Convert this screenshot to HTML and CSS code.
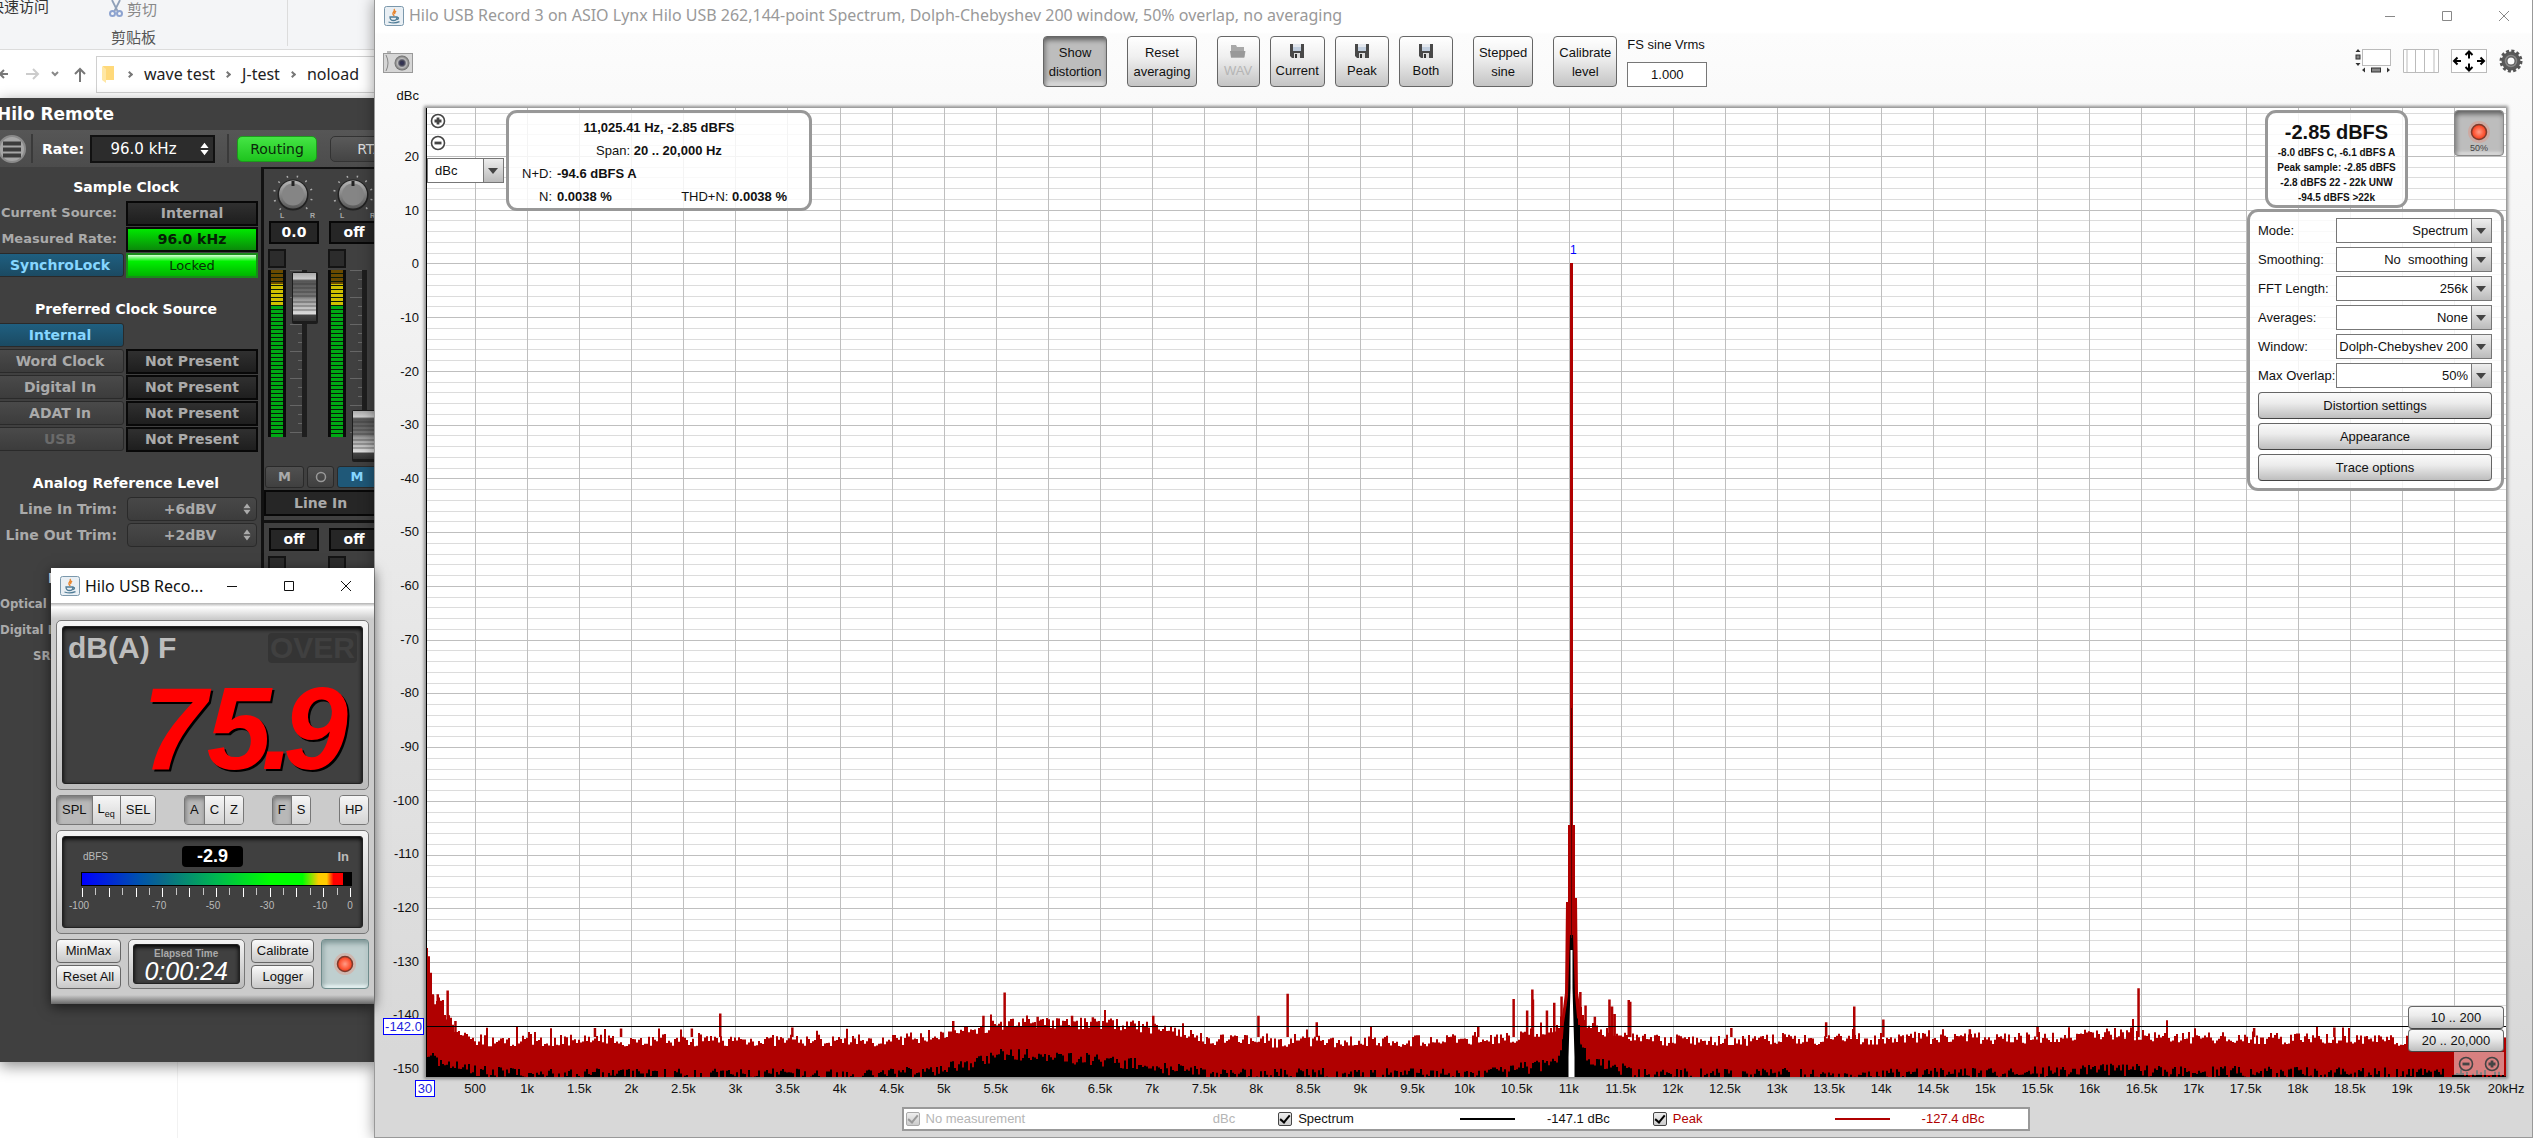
FILE: index.html
```html
<!DOCTYPE html>
<html lang="en">
<head>
<meta charset="utf-8">
<title>Hilo USB Record 3</title>
<link rel="stylesheet" href="styles.css">
</head>
<body>
<svg class="defs" aria-hidden="true">
  <defs>
    <linearGradient id="gMetal" x1="0" y1="0" x2="0" y2="1"><stop offset="0" stop-color="#b5b5b5"/><stop offset="1" stop-color="#585858"/></linearGradient>
    <linearGradient id="gCap" x1="0" y1="0" x2="0" y2="1">
      <stop offset="0" stop-color="#aaa"/><stop offset=".12" stop-color="#ccc"/><stop offset=".16" stop-color="#555"/><stop offset=".5" stop-color="#777"/><stop offset=".55" stop-color="#999"/><stop offset=".85" stop-color="#ddd"/><stop offset=".88" stop-color="#444"/><stop offset="1" stop-color="#333"/>
    </linearGradient>
    <radialGradient id="gLed"><stop offset="0" stop-color="#ff9c88"/><stop offset=".5" stop-color="#ff6a4c"/><stop offset="1" stop-color="#f23a18"/></radialGradient>
    <radialGradient id="gLens"><stop offset="0" stop-color="#222"/><stop offset=".4" stop-color="#556"/><stop offset=".6" stop-color="#bbb"/><stop offset="1" stop-color="#666"/></radialGradient>
  </defs>
  <symbol id="java" viewBox="0 0 20 20">
    <rect x=".5" y=".5" width="19" height="19" rx="2" fill="#e9eff4" stroke="#7b98ac"/>
    <path d="M10 3c2 2-2 3-1 5 0 1 1 1 1 2M12 5c-1 1-2 2-1 3" fill="none" stroke="#e8842c" stroke-width="1.4"/>
    <path d="M6 11h7c0 2-1 3.500-3.500 3.500S6 13 6 11zM13 11.500c2-.5 2 2-.5 2M4.500 16c3 1 8 1 11-.3" fill="none" stroke="#4f7c96" stroke-width="1.300"/>
  </symbol>
  <symbol id="disk" viewBox="0 0 14 14">
    <path d="M0 0h14v14H2l-2-2z" fill="#484848"/><path d="M3 0h8v7H3z" fill="#e4e8ee"/><path d="M3 3h8v4H3z" fill="#c2cfdf"/><path d="M4 9h6v5H4z" fill="#ddd"/><path d="M5 10h2v4H5z" fill="#333"/>
  </symbol>
  <symbol id="plus" viewBox="0 0 16 16"><circle cx="8" cy="8" r="6.500" fill="none" stroke="#444" stroke-width="1.600"/><path d="M8 4.500v7M4.500 8h7" stroke="#444" stroke-width="2.800"/></symbol>
  <symbol id="minus" viewBox="0 0 16 16"><circle cx="8" cy="8" r="6.500" fill="none" stroke="#444" stroke-width="1.600"/><path d="M4.500 8h7" stroke="#444" stroke-width="2.800"/></symbol>
  <symbol id="led" viewBox="0 0 24 24"><circle cx="12" cy="12" r="11" fill="#ff7050" opacity=".25"/><circle cx="12" cy="12" r="7.500" fill="url(#gLed)" stroke="#7d3a2c" stroke-width="1.500"/></symbol>
  <symbol id="updown" viewBox="0 0 10 14"><path d="M5 0l4.500 6h-9zM5 14l4.500-6h-9z" fill="currentColor"/></symbol>
  <symbol id="min" viewBox="0 0 12 12"><path d="M1 6.500h10" stroke="currentColor"/></symbol>
  <symbol id="max" viewBox="0 0 12 12"><path d="M1.500 1.500h9v9h-9z" fill="none" stroke="currentColor"/></symbol>
  <symbol id="close" viewBox="0 0 12 12"><path d="M1 1l10 10M11 1L1 11" stroke="currentColor"/></symbol>
  <symbol id="knob" viewBox="0 0 42 44">
    <circle cx="21" cy="20" r="19" fill="none" stroke="#aaa" stroke-width="2" stroke-dasharray="1.500 8.450" transform="rotate(130 21 20)"/>
    <path d="M10 32h22v9H10z" fill="#404040"/>
    <circle cx="21" cy="20" r="15.500" fill="#222"/><circle cx="21" cy="19.500" r="14" fill="url(#gMetal)"/><circle cx="21" cy="19.500" r="11" fill="#858585"/>
    <path d="M19.500 6h3v5h-3z" fill="#222"/>
  </symbol>
  <symbol id="fader" viewBox="0 0 26 52">
    <rect width="26" height="52" rx="2" fill="#1c1c1c"/><rect x="1" y="1" width="23" height="48" fill="url(#gCap)"/>
    <path d="M1 12h23M1 16h23M1 20h23M1 24h23M1 30h23M1 34h23M1 38h23" stroke="#333" stroke-width="1" opacity=".6"/>
  </symbol>
</svg>

<div class="desktop">
  <section class="explorer">
    <div class="ribbon">
      <span class="quick">快速访问</span>
      <div class="clip">
        <span class="cut"><svg width="14" height="18" viewBox="0 0 14 18"><path d="M3 0l5.500 11M11 0L5.500 11" stroke="#8fa0b8" stroke-width="1.800"/><circle cx="3.500" cy="13.500" r="2.500" fill="none" stroke="#8da3d0" stroke-width="2"/><circle cx="10.500" cy="13.500" r="2.500" fill="none" stroke="#8da3d0" stroke-width="2"/></svg>剪切</span>
        <span>剪贴板</span>
      </div>
    </div>
    <nav class="address">
      <svg class="arrows" width="88" height="18" viewBox="0 0 88 18" fill="none" stroke-width="2"><path d="M8 9h-8M4 5L0 9l4 4" stroke="#777"/><path d="M26 9h11M33 4l5 5-5 5" stroke="#ccc"/><path d="M52 7l3 3 3-3" stroke="#888"/><path d="M80 17V4M75 9l5-5 5 5" stroke="#777"/></svg>
      <div class="crumbs">
        <svg width="13" height="17" viewBox="0 0 13 17"><path d="M1 0h11v14H3z" fill="#ffd97a"/><path d="M0 0l4 3v14l-4-3z" fill="#ffe7a4"/></svg>
        <i></i><a href="#">wave test</a><i></i><a href="#">J-test</a><i></i><a href="#">noload</a>
      </div>
    </nav>
    <div class="files"></div>
  </section>

  <section class="remote">
    <h1>Hilo Remote</h1>
    <div class="rbar">
      <button class="menu" aria-label="Menu"><svg width="28" height="28" viewBox="0 0 28 28"><circle cx="14" cy="14" r="13" fill="#a6a6a6" stroke="#8a8a8a" stroke-width="2"/><path d="M5 8.500h18M5 14.500h18M5 20.500h18" stroke="#3c3c3c" stroke-width="4"/></svg></button>
      <span class="vline"></span>
      <label for="rate">Rate:</label>
      <span class="rsel big"><select id="rate"><option>96.0 kHz</option></select><svg width="9" height="14"><use href="#updown"/></svg></span>
      <span class="vline"></span>
      <button class="routing">Routing</button>
      <button class="rta">RTA</button>
    </div>
    <div class="rbody">
      <div class="clock">
        <h2>Sample Clock</h2>
        <div class="pair"><span class="lab">Current Source:</span><span class="box">Internal</span></div>
        <div class="pair"><span class="lab">Measured Rate:</span><span class="box rated">96.0 kHz</span></div>
        <div class="pair"><button class="rb on">SynchroLock</button><span class="box locked">Locked</span></div>
        <h2 class="gap">Preferred Clock Source</h2>
        <div class="pair"><button class="rb on">Internal</button></div>
        <div class="pair"><button class="rb">Word Clock</button><span class="box">Not Present</span></div>
        <div class="pair"><button class="rb">Digital In</button><span class="box">Not Present</span></div>
        <div class="pair"><button class="rb">ADAT In</button><span class="box">Not Present</span></div>
        <div class="pair"><button class="rb dim">USB</button><span class="box">Not Present</span></div>
        <h2 class="gap">Analog Reference Level</h2>
        <div class="pair trim"><label class="lab" for="lin">Line In Trim:</label><span class="rsel"><select id="lin"><option>+6dBV</option></select><svg width="8" height="12"><use href="#updown"/></svg></span></div>
        <div class="pair trim"><label class="lab" for="lout">Line Out Trim:</label><span class="rsel"><select id="lout"><option>+2dBV</option></select><svg width="8" height="12"><use href="#updown"/></svg></span></div>
        <h2 class="cutoff">Digital</h2>
        <div class="thin">Optical In:</div>
        <div class="thin">Digital In:</div>
        <div class="thin src">SRC:</div>
      </div>
      <div class="mixer">
        <div class="channels">
          <div class="chan">
            <svg class="pan" width="42" height="44"><use href="#knob"/></svg><div class="lr"><b>L</b><b>R</b></div>
            <span class="val">0.0</span><span class="clipled"></span>
            <div class="lane"><span class="meter"></span><span class="track"><svg class="fader hi" width="26" height="52"><use href="#fader"/></svg></span></div>
          </div>
          <div class="chan">
            <svg class="pan" width="42" height="44"><use href="#knob"/></svg><div class="lr"><b>L</b><b>R</b></div>
            <span class="val">off</span><span class="clipled"></span>
            <div class="lane"><span class="meter"></span><span class="track"><svg class="fader lo" width="26" height="52"><use href="#fader"/></svg></span></div>
          </div>
        </div>
        <div class="mutes"><button>M</button><button class="o" aria-label="Solo"><svg width="12" height="12"><circle cx="6" cy="6" r="4.500" fill="none" stroke="#999" stroke-width="1.500"/></svg></button><button class="on">M</button></div>
        <div class="name">Line In</div>
        <div class="channels low">
          <div class="chan"><span class="val">off</span><span class="clipled"></span></div>
          <div class="chan"><span class="val">off</span><span class="clipled"></span></div>
        </div>
      </div>
    </div>
  </section>

  <section class="main">
    <header class="title">
      <svg width="20" height="20"><use href="#java"/></svg>
      <h1>Hilo USB Record 3 on ASIO Lynx Hilo USB 262,144-point Spectrum, Dolph-Chebyshev 200 window, 50% overlap, no averaging</h1>
      <div class="wbtns"><button aria-label="Minimise"><svg width="12" height="12"><use href="#min"/></svg></button><button aria-label="Maximise"><svg width="12" height="12"><use href="#max"/></svg></button><button aria-label="Close"><svg width="12" height="12"><use href="#close"/></svg></button></div>
    </header>
    <div class="tools">
      <button class="flat" aria-label="Capture"><svg width="30" height="22" viewBox="0 0 30 22"><path d="M4 0h4v2H4z" fill="#bbb"/><rect x=".5" y="2.500" width="29" height="19" fill="#d6d6d6" stroke="#999"/><path d="M3 4q4 8 0 16" fill="none" stroke="#888"/><circle cx="19" cy="12" r="7.500" fill="url(#gLens)"/><circle cx="19" cy="12" r="2" fill="#335"/></svg></button>
      <div class="group">
        <button class="tb pressed">Show<br>distortion</button>
        <button class="tb">Reset<br>averaging</button>
        <div class="saves">
          <button class="tb ico wav" disabled><svg width="16" height="14" viewBox="0 0 16 14"><path d="M1 1h5l1 2h7v4h1.500l-1 6.500H1z" fill="#a8a8a8"/><path d="M0 7h15l-1 6.500H1z" fill="#999"/></svg>WAV</button>
          <button class="tb ico"><svg width="14" height="14"><use href="#disk"/></svg>Current</button>
          <button class="tb ico"><svg width="14" height="14"><use href="#disk"/></svg>Peak</button>
          <button class="tb ico"><svg width="14" height="14"><use href="#disk"/></svg>Both</button>
        </div>
        <button class="tb step">Stepped<br>sine</button>
        <div class="saves fs"><button class="tb">Calibrate<br>level</button>
        <div class="vrms"><label for="fs">FS sine Vrms</label><input id="fs" value="1.000"></div></div>
      </div>
      <div class="views">
        <button class="flat" aria-label="Scrollbars"><svg width="36" height="24" viewBox="0 0 36 24"><rect x="7.500" y=".5" width="28" height="16" fill="#fff" stroke="#bbb"/><path d="M3 0l2.500 3h-5zM3 17l2.500-3h-5zM7 21l3-2.500v5zM35 21l-3-2.500v5z" fill="#333"/><rect x="1" y="6" width="4" height="4" fill="#888" stroke="#333"/><rect x="16.500" y="19" width="9" height="4" fill="#888" stroke="#333"/></svg></button>
        <button class="flat" aria-label="Frequency axis"><svg width="36" height="24" viewBox="0 0 36 24"><path d="M.5.5h35v23H.5zM4 0v24M12.500 0v24M21.500 0v24M31 0v24" fill="#fff" stroke="#bbb"/></svg></button>
        <button class="flat" aria-label="Graph limits"><svg width="36" height="24" viewBox="0 0 36 24"><rect x=".5" y=".5" width="35" height="23" fill="#fff" stroke="#bbb"/><path d="M3 12h7M6.500 8.500L3 12l3.500 3.500M33 12h-7M29.500 8.500L33 12l-3.500 3.500M18 2.500v7M14.500 6L18 2.500 21.500 6M18 21.500v-7M14.500 18l3.500 3.500 3.500-3.500" fill="none" stroke="#000" stroke-width="2"/></svg></button>
        <button class="flat gear" aria-label="Settings"><svg width="24" height="24" viewBox="0 0 24 24"><circle cx="12" cy="12" r="6.500" fill="none" stroke="#5a5a5a" stroke-width="6"/><circle cx="12" cy="12" r="10" fill="none" stroke="#555" stroke-width="3" stroke-dasharray="3 2.236"/><circle cx="12" cy="12" r="5.500" fill="none" stroke="#888" stroke-width="1.500"/></svg></button>
      </div>
    </div>
    <div class="chart">
      <div class="unit">dBc</div>
      <div class="ylabels"><div class="ticks" id="yticks"></div><output class="cursor ycur">-142.0</output></div>
      <div class="plot">
        <svg id="trace" viewBox="0 0 2080 969" preserveAspectRatio="none"></svg>
        <span class="mark">1</span>
        <div class="zoomer"><button class="flat" aria-label="Zoom in"><svg width="16" height="16"><use href="#plus"/></svg></button><button class="flat" aria-label="Zoom out"><svg width="16" height="16"><use href="#minus"/></svg></button>
          <span class="combo unitsel"><select aria-label="Axis unit"><option>dBc</option></select></span></div>
        <div class="card info">
          <p><b>11,025.41 Hz, -2.85 dBFS</b></p>
          <p>Span: <b>20 .. 20,000 Hz</b></p>
          <p class="two"><span class="k">N+D:</span><b>-94.6 dBFS A</b></p>
          <p class="two"><span class="k">N:</span><b>0.0038 %</b><span class="thd">THD+N: <b>0.0038 %</b></span></p>
        </div>
        <div class="card level"><strong>-2.85 dBFS</strong><span>-8.0 dBFS C, -6.1 dBFS A</span><span>Peak sample: -2.85 dBFS</span><span>-2.8 dBFS 22 - 22k UNW</span><span>-94.5 dBFS &gt;22k</span></div>
        <button class="rec"><svg width="24" height="24"><use href="#led"/></svg>50%</button>
        <form class="card settings">
          <label for="s1">Mode:</label><span class="combo"><select id="s1"><option>Spectrum</option></select></span>
          <label for="s2">Smoothing:</label><span class="combo"><select id="s2"><option>No&nbsp; smoothing</option></select></span>
          <label for="s3">FFT Length:</label><span class="combo"><select id="s3"><option>256k</option></select></span>
          <label for="s4">Averages:</label><span class="combo"><select id="s4"><option>None</option></select></span>
          <label for="s5">Window:</label><span class="combo"><select id="s5"><option>Dolph-Chebyshev 200</option></select></span>
          <label for="s6">Max Overlap:</label><span class="combo"><select id="s6"><option>50%</option></select></span>
          <button type="button" class="wide">Distortion settings</button>
          <button type="button" class="wide">Appearance</button>
          <button type="button" class="wide">Trace options</button>
        </form>
        <div class="ranges"><button class="wide">10 .. 200</button><button class="wide">20 .. 20,000</button><div class="zz"><button class="flat" aria-label="Zoom out"><svg width="16" height="16"><use href="#minus"/></svg></button><button class="flat" aria-label="Zoom in"><svg width="16" height="16"><use href="#plus"/></svg></button></div></div>
      </div>
      <div class="xlabels"><output class="cursor xcur">30</output><div class="ticks" id="xticks"></div></div>
    </div>
    <div class="legend">
      <div class="leg off"><label><input type="checkbox" checked disabled>No measurement</label><span>dBc</span></div>
      <div class="leg"><label><input type="checkbox" checked>Spectrum</label><i></i><span>-147.1 dBc</span></div>
      <div class="leg peak"><label><input type="checkbox" checked>Peak</label><i></i><span>-127.4 dBc</span></div>
    </div>
  </section>

  <section class="spl">
    <header class="title">
      <svg width="20" height="20"><use href="#java"/></svg><h1>Hilo USB Reco...</h1>
      <div class="wbtns"><button aria-label="Minimise"><svg width="12" height="12"><use href="#min"/></svg></button><button aria-label="Maximise"><svg width="12" height="12"><use href="#max"/></svg></button><button aria-label="Close"><svg width="12" height="12"><use href="#close"/></svg></button></div>
    </header>
    <div class="sbody">
      <div class="bezel"><div class="lcd">
        <div class="lcdtop"><span>dB(A) F</span><span class="over">OVER</span></div>
        <div class="digits">75<span class="dot">.</span>9</div>
      </div></div>
      <div class="modes">
        <div class="seg"><button class="down">SPL</button><button>L<sub>eq</sub></button><button>SEL</button></div>
        <div class="seg"><button class="down">A</button><button>C</button><button>Z</button></div>
        <div class="seg"><button class="down">F</button><button>S</button></div>
        <div class="seg"><button>HP</button></div>
      </div>
      <div class="bezel"><div class="lcd vu">
        <div class="vutop"><span>dBFS</span><output>-2.9</output><b>In</b></div>
        <div class="bar"></div>
        <svg class="vticks" width="271" height="9" id="vticks"></svg>
        <div class="vnums"><span>-100</span><span>-70</span><span>-50</span><span>-30</span><span>-10</span><span>0</span></div>
      </div></div>
      <div class="foot">
        <div class="col"><button class="sb">MinMax</button><button class="sb">Reset All</button></div>
        <div class="bezel small"><div class="lcd time"><span>Elapsed Time</span><output>0:00:24</output></div></div>
        <div class="col"><button class="sb">Calibrate</button><button class="sb">Logger</button></div>
        <button class="srec" aria-label="Record"><svg width="24" height="24"><use href="#led"/></svg></button>
      </div>
    </div>
  </section>
</div>
<script src="chart.js"></script>
</body>
</html>
```
FILE: chart.js
```js
// Builds the axis labels, grid and spectrum traces.
const W = 2080, H = 969, TOP = 28.9, SPAN = 180.3;
const fx = f => (f - 30) / 19970 * W;
const hz = x => 30 + x / W * 19970;
const fy = db => (TOP - db) / SPAN * H;

let seed = 7;
const rnd = () => (seed = (seed * 16807) % 2147483647) / 2147483647;

// Linear interpolation through [frequency, level] points.
function level(points, f) {
  for (let i = 1; i < points.length; i++) {
    const [a, va] = points[i - 1], [b, vb] = points[i];
    if (f <= b) return va + (vb - va) * (f - a) / (b - a);
  }
  return points[points.length - 1][1];
}

const redBase = [[30, -127], [60, -131], [90, -137], [220, -140], [300, -142.6], [500, -144.7], [4500, -144.7], [5200, -143], [5600, -141.5], [6600, -141.6], [7100, -142.6], [7500, -144.4], [8200, -145], [10200, -144.7], [10500, -144], [10900, -142], [10980, -138], [11070, -138], [11150, -141], [11350, -144], [12000, -144.8], [13000, -144.6], [15500, -144.2], [16200, -143.4], [17000, -144.2], [20000, -144.8]];
const blackBase = [[30, -147], [150, -148.5], [400, -150], [1000, -151], [4500, -151], [5200, -149.2], [5550, -147], [6500, -148.2], [7000, -149.5], [7500, -150.8], [10200, -151], [10500, -150], [10800, -149], [10920, -147], [10990, -140], [11060, -140], [11130, -146], [11200, -148.5], [11500, -150], [11800, -151], [15300, -150.8], [16000, -149.8], [17000, -150.5], [20000, -151]];
const peaks = [[95, -136.2], [140, -136], [235, -135.3], [310, -141], [1650, -142.3], [1900, -142.4], [2580, -142.4], [2853, -139.6], [3545, -142.2], [5090, -141], [5380, -140], [5583, -135.7], [5900, -140.2], [6230, -140], [6430, -140.3], [7010, -140], [8020, -140], [8300, -135.9], [8580, -141.2], [10130, -142], [10470, -136.9], [10600, -139], [10650, -135.1], [10655, -137], [10790, -139], [10860, -137.6], [10930, -136.4], [11110, -135.6], [11160, -138.1], [11250, -140.2], [11390, -137], [11415, -138.3], [11440, -139.7], [11575, -137.1], [11590, -137.4], [12560, -142.3], [13470, -141.2], [13740, -138.3], [14020, -140.7], [14850, -142.5], [15500, -142], [16470, -134.9], [17580, -142.3], [18350, -142.2]];

const grid = { minor: '', major: '' };
for (let db = 28; db > -151; db -= 2) grid[db % 10 ? 'minor' : 'major'] += `M0 ${Math.round(fy(db)) + .5}H${W}`;
for (let f = 500; f < 20000; f += 500) grid.major += `M${Math.round(fx(f)) + .5} 0V${H}`;

let red = `M0 ${H}`, black = `M0 ${H}`;
for (let x = 0; x < W; x += 2) {
  const f = hz(x);
  const r = level(redBase, f) + (rnd() - .45) * 2.2 + (rnd() > .9 ? rnd() * 2 : 0);
  const k = level(blackBase, f) + (rnd() - .5) * 2.4;
  red += `V${fy(r).toFixed(1)}H${x + 2}`;
  black += `V${Math.min(H, fy(k)).toFixed(1)}H${x + 2}`;
}
red += `V${H}z`;
black += `V${H}z`;
for (const [f, db] of peaks) red += `M${(fx(f) - 1).toFixed(1)} ${H - 40}V${fy(db).toFixed(1)}h2.500V${H - 40}z`;

document.getElementById('trace').innerHTML = `
  <path d="${grid.minor}" stroke="#dcdcdc" shape-rendering="crispEdges"/>
  <path d="${grid.major}" stroke="#bfbfbf" shape-rendering="crispEdges"/>
  <path d="${red}" fill="#b00000"/>
  <path d="M1134 969V925L1139 885L1140 794H1142V717H1144V155H1147V717H1149V790H1151L1152 885L1158 925V969z" fill="#b00000"/>
  <path d="${black}" fill="#000"/>
  <path d="M1134 969L1138 915L1142 888L1144 827H1147L1149 888L1152 920L1159 969z" fill="#000"/>
  <path d="M1145.500 600V830" stroke="#5a0000"/>
  <path d="M1142.500 969V949L1144.500 880V842H1146.500V880L1148.500 949V969z" fill="#fff"/>
  <path d="M0 ${Math.round(fy(-142)) + .5}H${W}M.5 0V${H}" stroke="#000" shape-rendering="crispEdges"/>`;

const yt = [], xt = [];
for (let v = 20; v >= -150; v -= 10) yt.push(`<span>${v}</span>`);
for (let f = 500; f <= 20000; f += 500) xt.push(`<span>${f < 1000 ? f : f / 1000 + (f === 20000 ? 'kHz' : 'k')}</span>`);
document.getElementById('yticks').innerHTML = yt.join('');
document.getElementById('xticks').innerHTML = xt.join('');

let t = '';
for (let i = 0; i <= 20; i++) t += `<path d="M${Math.round(i * 13.4) + 1.5} 0v${i % 2 ? 7 : 9}" stroke="#fff" opacity="${i % 2 ? .7 : 1}"/>`;
document.getElementById('vticks').innerHTML = t;
```
FILE: styles.css
```css
* { box-sizing: border-box; }
body { margin: 0; font: 13px/16px "Liberation Sans", Arial, sans-serif; color: #111; background: #fff; }
button, input, select { font: inherit; color: inherit; margin: 0; }
button { padding: 0; white-space: nowrap; }
select { appearance: none; background: none; border: 0; padding: 0; margin: 0; }
h1, h2, p { margin: 0; }
svg { display: block; flex: none; }
.defs { position: absolute; width: 0; height: 0; }
.flat { border: 0; background: none; }
.desktop { position: relative; height: 100vh; overflow: hidden; }

/* Window frames */
.title { display: flex; align-items: center; background: #fff; }
.title h1 { flex: 1; font: 16px/20px "Noto Sans", sans-serif; white-space: nowrap; }
.wbtns { display: flex; }
.wbtns button { width: 57px; border: 0; background: none; display: grid; place-items: center; }

/* Explorer */
.explorer { position: absolute; left: 0; top: 0; bottom: 0; width: 375px; display: flex; flex-direction: column; font: 15px/20px "Noto Sans", "Noto Sans CJK SC", sans-serif; overflow: hidden; }
.ribbon { height: 50px; background: #f4f5f7; border-bottom: 1px solid #dcdcdc; display: flex; flex: none; font-family: "Noto Sans CJK SC", sans-serif; }
.quick { margin: -4px 0 0 -11px; width: 73px; color: #333; }
.clip { width: 226px; display: flex; flex-direction: column; gap: 9px; padding: 0 0 0 49px; border-right: 1px solid #dcdcdc; height: 46px; color: #555; }
.cut { display: flex; gap: 4px; color: #888; line-height: 18px; }
.cut svg { margin-left: -2px; }
.address { display: flex; align-items: center; height: 48px; flex: none; gap: 8px; }
.crumbs { flex: 1; height: 37px; border: 1px solid #d0d0d0; border-right: 0; display: flex; align-items: center; padding-left: 5px; font-size: 16px; white-space: nowrap; }
.crumbs a { color: #222; text-decoration: none; }
.crumbs i { width: 5px; height: 5px; border: solid #777; border-width: 2px 2px 0 0; transform: rotate(45deg); margin: 0 12px 0 10px; }
.crumbs svg { margin-right: 2px; }
.files { flex: 1; width: 178px; border-right: 1px solid #f2f2f2; }

/* Hilo Remote */
.remote { position: absolute; left: 0; top: 98px; width: 375px; height: 964px; background: #404040; color: #fff; font: bold 14px/18px "DejaVu Sans", sans-serif; box-shadow: 0 4px 14px rgba(0,0,0,.45); overflow: hidden; }
.remote h1 { font-size: 17px; line-height: 32px; margin-left: -3px; }
.rbar { height: 37px; display: flex; align-items: center; background: linear-gradient(#565656, #4c4c4c); }
.rbar > * { flex: none; }
.menu { border: 0; background: none; width: 26px; margin-left: -2px; height: 28px; }
.vline { width: 2px; height: 29px; background: #3a3a3a; margin: 0 9px 0 7px; }
.rbar .rsel + .vline { margin: 0 8px 0 12px; }
.rsel { position: relative; display: block; }
.rsel svg { position: absolute; right: 6px; top: 6px; color: #aaa; pointer-events: none; }
.rsel select { width: 100%; height: 24px; text-align-last: center; padding-right: 4px; color: #aaa; background: linear-gradient(#484848, #3c3c3c); border: 1px solid #2a2a2a; border-radius: 4px; }
.rsel.big { width: 125px; margin-left: 6px; }
.rsel.big select { height: 28px; background: #2c2c2c; border: 2px solid #111; border-radius: 0; color: #fff; font-size: 15px; font-weight: normal; padding-right: 18px; }
.rsel.big svg { color: #fff; top: 7px; }
.routing, .rta { height: 26px; width: 80px; border: 1px solid #1c9a1c; border-radius: 5px; background: linear-gradient(#45e545, #1ec41e); color: #0a2a0a; font-weight: normal; }
.rta { margin-left: 13px; background: linear-gradient(#5a5a5a, #444); border-color: #333; color: #ddd; }
.rbody { display: grid; grid-template-columns: 260px 1fr; }
.clock { padding: 7px 2px 0 0; }
.clock h2 { font-size: 14px; line-height: 26px; text-align: center; padding-right: 6px; white-space: nowrap; }
.clock h2.gap { margin: 18px 0 0; }
.pair { display: grid; grid-template-columns: 124px 132px; gap: 2px; height: 26px; align-items: center; }
.lab { text-align: right; color: #aaa; padding-right: 7px; font-size: 13px; white-space: nowrap; }
.trim .lab { font-size: 14px; }
.box { height: 25px; border: 2px solid #080808; background: linear-gradient(#303030, #1e1e1e); color: #aaa; text-align: center; line-height: 21px; font-size: 14px; }
.box.rated { background: linear-gradient(#00e800, #0a8a0a); color: #052005; }
.box.locked { background: linear-gradient(#d8ffd8, #00f000 30%, #00b400); border-color: #1a8a1a; color: #063006; font-weight: normal; font-size: 13px; }
.rb { height: 24px; border: 1px solid #2a2a2a; border-radius: 3px; background: linear-gradient(#4a4a4a, #3c3c3c); color: #aaa; margin-left: -4px; }
.rb.on { background: linear-gradient(#1f5f80, #1b4a62); color: #86d6ff; }
.rb.dim { color: #6a6a6a; }
.trim .rsel { margin: 0 1px; }
.clock h2.cutoff { text-align: left; padding-left: 48px; margin-top: 17px; }
.thin { font: bold 13px/26px "DejaVu Sans Condensed", "DejaVu Sans", sans-serif; color: #aaa; }
.thin.src { padding-left: 33px; }
.mixer { border-left: 3px solid #111; border-top: 2px solid #111; margin-left: 1px; width: 140px; }
.channels { display: flex; gap: 8px; padding: 6px 0 0 4px; }
.chan { width: 52px; display: flex; flex-direction: column; flex: none; }
.pan { margin-left: 4px; }
.lr { display: flex; justify-content: space-between; font: bold 7px/8px "Liberation Sans", sans-serif; color: #aaa; padding: 0 5px 0 12px; margin-top: -7px; }
.val { height: 23px; border: 2px solid #080808; background: #262626; text-align: center; line-height: 19px; font-size: 14px; margin: 1px 1px 5px; }
.clipled { width: 18px; height: 19px; border: 2px solid #141414; background: #2c2c2c; }
.lane { display: flex; margin-top: 2px; height: 167px; gap: 4px; }
.meter { width: 18px; border: solid #0a0a0a; border-width: 0 3px; background: repeating-linear-gradient(transparent 0 3px, #0a1a0a 3px 4px), linear-gradient(#6a4a00 0 14px, #d0c000 14px 36px, #00a814 36px); }
.track { position: relative; width: 26px; background: linear-gradient(#1e1e1e, #1e1e1e) 12px 0 / 5px 100% no-repeat, repeating-linear-gradient(#666 0 1px, transparent 1px 9px) 8px 0 / 4px 100% no-repeat, repeating-linear-gradient(#666 0 1px, transparent 1px 27px) 0 0 / 12px 100% no-repeat; }
.fader { position: absolute; left: 2px; }
.fader.hi { top: 2px; }
.fader.lo { top: 140px; }
.mutes { display: flex; gap: 3px; margin: 29px 0 2px 1px; }
.mutes button { width: 39px; height: 22px; border: 1px solid #2a2a2a; border-radius: 3px; background: linear-gradient(#505050, #404040); color: #aaa; font-size: 13px; display: grid; place-items: center; }
.mutes .o { width: 27px; }
.mutes .on { background: #1f5878; color: #86d6ff; width: 40px; }
.name { border: 2px solid #080808; height: 26px; background: #262626; color: #aaa; line-height: 22px; padding-left: 28px; }
.low { margin-top: 4px; border-top: 3px solid #111; padding-top: 4px; }

/* Spectrum window */
.main { position: absolute; left: 374px; right: 0; top: 0; bottom: 0; display: flex; flex-direction: column; border: 1px solid #999; border-top: 0; background: linear-gradient(#fff 32px, #fcfcfc 34px, #d8d8d8 1050px); box-shadow: 0 0 14px rgba(0,0,0,.4); }
.main > .title { height: 32px; flex: none; padding-left: 9px; background: none; }
.main > .title h1 { color: #999; margin: 0 0 2px 5px; }
.main > .title svg { color: #888; }
.tools { display: flex; justify-content: space-between; align-items: flex-start; height: 56px; flex: none; padding: 4px 9px 0 8px; }
.tools > .flat { margin-top: 15px; }
.group { display: flex; gap: 20px; margin-right: 18px; }
.saves { display: flex; gap: 10px; }
.tb { height: 51px; min-width: 54px; border: 1px solid #666; border-radius: 4px; background: linear-gradient(#fff, #f0f0f0 40%, #c4c4c4); line-height: 19px; padding: 0 5px; }
.tb.pressed { background: #bdbdbd; box-shadow: inset 1px 3px 5px rgba(0,0,0,.5), inset 0 -4px 4px #ddd; }
.ico { display: flex; flex-direction: column; align-items: center; justify-content: center; gap: 3px; }
.wav { min-width: 43px; color: #b5b5b5; }
.vrms { width: 80px; display: flex; flex-direction: column; gap: 9px; white-space: nowrap; padding-top: 1px; }
.vrms input { width: 80px; height: 25px; border: 1px solid #777; text-align: center; background: #fff; }
.views { display: flex; gap: 12px; padding-top: 13px; }
.chart { flex: 1; min-height: 0; display: grid; grid-template: 20px 1fr 30px / 51px 1fr; margin-right: 26px; }
.unit { text-align: right; padding-right: 7px; }
.ylabels { grid-area: 2 / 1; position: relative; }
.ylabels .ticks { height: 100%; display: flex; flex-direction: column; justify-content: space-between; text-align: right; padding: 41px 7px 0 0; }
.cursor { position: absolute; border: 1px solid #00f; background: #fff; color: #22d; height: 17px; line-height: 15px; text-align: center; z-index: 2; }
.ycur { right: 2px; width: 41px; bottom: 42px; }
.xlabels { grid-area: 3 / 2; position: relative; padding-top: 4px; margin: 0 -26px 0 23px; }
.xcur { left: -34px; top: 3px; width: 20px; }
.xlabels .ticks { display: flex; }
.xlabels .ticks span { flex: 1 1 0; width: 0; display: flex; justify-content: center; white-space: nowrap; }
.plot { grid-area: 2 / 2; position: relative; min-height: 0; background: #fff; box-shadow: 0 0 3px 2px #8c8c8c; }
#trace { width: 100%; height: 100%; position: absolute; }
.mark { position: absolute; left: 55%; top: 14%; color: #00f; font-size: 12px; line-height: 12px; }
.zoomer { position: absolute; left: 0; top: 5px; width: 78px; display: flex; flex-direction: column; align-items: flex-start; gap: 6px; }
.zoomer .flat { margin-left: 4px; background: #fff; border-radius: 8px; }
.combo { display: block; position: relative; height: 25px; border: 1px solid #777; background: #fff; }
.combo select { width: 100%; height: 23px; padding: 0 23px 0 0; text-align-last: right; }
.combo::before { content: ""; position: absolute; right: 0; top: 0; width: 19px; height: 23px; border-left: 1px solid #777; background: linear-gradient(#eee, #bbb); }
.combo::after { content: ""; position: absolute; right: 5px; top: 9px; border: 5px solid transparent; border-top: 6px solid #444; border-bottom: 0; }
.unitsel { width: 77px; margin: 1px 0 0 1px; }
.unitsel select { text-align-last: left; padding-left: 7px; }
.card { position: absolute; border: 3px solid #989898; border-radius: 11px; background: rgba(255,255,255,.82); }
.info { left: 80px; top: 2px; width: 306px; height: 101px; padding: 3px 9px; }
.info p { line-height: 23px; text-align: center; white-space: nowrap; }
.info .two { display: flex; gap: 5px; }
.info .k { width: 34px; text-align: right; }
.info .thd { margin-left: auto; padding-right: 13px; }
.level { right: 98px; top: 2px; width: 143px; height: 98px; display: flex; flex-direction: column; align-items: center; font: bold 10px/15px "Liberation Sans", sans-serif; padding-top: 7px; white-space: nowrap; }
.level strong { font-size: 20px; line-height: 25px; }
.rec { position: absolute; right: 2px; top: 2px; width: 50px; height: 46px; border: 1px solid #888; border-radius: 4px; background: #bdbdbd; box-shadow: inset 1px 3px 5px rgba(0,0,0,.5), inset 0 -3px 3px #ddd; display: flex; flex-direction: column; align-items: center; font-size: 9px; line-height: 8px; padding-top: 9px; color: #444; }
.settings { right: 2px; top: 101px; width: 257px; display: grid; grid-template-columns: 78px 1fr; row-gap: 4px; padding: 6px 9px 7px 8px; align-items: center; white-space: nowrap; }
.wide { height: 27px; border: 1px solid #666; border-bottom-color: #444; border-radius: 4px; background: linear-gradient(#fafafa, #ececec 40%, #bebebe); }
.settings .wide { grid-column: 1 / 3; }
.ranges { position: absolute; right: 2px; bottom: 2px; width: 96px; display: flex; flex-direction: column; }
.ranges .wide { height: 23px; }
.zz { align-self: flex-end; width: 50px; height: 23px; display: flex; justify-content: space-between; align-items: center; padding: 0 4px; background: rgba(255,255,255,.5); }
.legend { align-self: center; margin: 0 0 6px 24px; height: 24px; flex: none; width: 1128px; border: 2px solid #999; background: #fff; display: grid; grid-template-columns: repeat(3, 1fr); align-items: center; }
.leg { display: flex; align-items: center; justify-content: space-between; padding: 0 43px 0 0; }
.leg:first-child { padding-left: 2px; }
.leg label { display: flex; gap: 6px; align-items: center; width: 182px; }
.leg i { width: 55px; height: 2px; background: #000; margin-right: auto; }
.leg.off { color: #b5b5b5; }
.leg.peak { color: #b00000; }
.leg.peak i { background: #b00000; }
.leg input { appearance: none; width: 14px; height: 14px; border: 1px solid #444; border-radius: 2px; background: linear-gradient(#eee, #ccc); display: grid; place-items: center; }
.leg input::after { content: ""; width: 4px; height: 8px; border: solid #000; border-width: 0 2px 2px 0; transform: rotate(40deg); margin-top: -3px; }
.leg.off input { border-color: #aaa; }
.leg.off input::after { border-color: #999; }

/* SPL meter window */
.spl { position: absolute; left: 51px; top: 568px; width: 323px; background: #cbcbcb; box-shadow: 0 3px 12px rgba(0,0,0,.6); }
.spl > .title { height: 35px; padding-left: 9px; }
.spl > .title h1 { margin-left: 5px; color: #111; }
.sbody { border-top: 1px solid #bbb; background: linear-gradient(#c4c4c4, #fff 3px, #cbcbcb 15px, #cbcbcb calc(100% - 9px), #b5b5b5 calc(100% - 7px), #686868); padding: 16px 5px 15px; display: flex; flex-direction: column; gap: 5px; }
.bezel { border: 1px solid #777; border-radius: 5px; background: linear-gradient(#f4f4f4, #bbb); padding: 5px; }
.lcd { background: #404040; border-radius: 3px; box-shadow: inset 0 2px 4px #000; height: 158px; border: 1px solid #222; overflow: hidden; }
.lcdtop { display: flex; justify-content: space-between; font: bold 30px/30px "Liberation Sans", sans-serif; color: #bdbdbd; padding: 6px 5px 0; }
.over { color: #404040; background: #343434; border-radius: 4px; padding: 0 2px; }
.digits { font: italic bold 116px/100px "Liberation Sans", sans-serif; color: #f00; text-align: right; margin-top: 16px; padding-right: 14px; text-shadow: 2px 2px 0 #000; white-space: nowrap; }
.dot { margin: 0 -10px; }
.modes { display: flex; justify-content: space-between; }
.seg { display: flex; border: 1px solid #777; border-radius: 4px; overflow: hidden; }
.seg button { border: 0; border-left: 1px solid #777; height: 28px; padding: 0 5px; background: linear-gradient(#f6f6f6, #d4d4d4); }
.seg button:first-child { border-left: 0; }
.seg .down { background: #b8b8b8; box-shadow: inset 1px 3px 4px rgba(0,0,0,.35); }
.seg sub { font-size: 9px; line-height: 1; }
.vu { height: 92px; padding: 9px 10px 0 18px; color: #bbb; }
.vutop { display: grid; grid-template-columns: 101px 61px 1fr; align-items: center; font-size: 10px; margin-bottom: 5px; }
.vutop output { background: #000; color: #fff; border-radius: 4px; font: bold 18px/21px "Liberation Sans", sans-serif; text-align: center; }
.vutop span { padding-left: 2px; }
.vutop b { font-size: 13px; text-align: right; padding-right: 3px; }
.bar { height: 14px; border: 1px solid #000; background: linear-gradient(90deg, #00f, #05a 22%, #0a6a8a 30%, #00b850 50%, #0f0 70%, #0f0 82%, #fc0 88%, #fc0 91%, #f00 93.500%, #f00 97%, #000 97%); }
.vticks { margin-top: 2px; }
.vnums { display: grid; grid-template-columns: 106px 54px 54px 54px 52px 8px; margin: 2px 0 0 -55px; font-size: 10px; text-align: center; width: 328px; }
.vnums span { line-height: 14px; }
.foot { display: flex; justify-content: space-between; }
.col { display: flex; flex-direction: column; gap: 2px; width: 63px; }
.foot .col:first-child { width: 65px; }
.sb { height: 24px; border: 1px solid #666; border-radius: 4px; background: linear-gradient(#fafafa, #c8c8c8); }
.small { width: 117px; padding: 4px; }
.time { height: 40px; display: flex; flex-direction: column; align-items: center; }
.time span { font: bold 10px/12px "Liberation Sans", sans-serif; color: #aaa; padding-top: 3px; }
.time output { font: italic 25px/23px "Liberation Sans", sans-serif; color: #fff; }
.srec { width: 48px; border: 1px solid #6f8c8c; border-radius: 4px; background: #bfcfcf; display: grid; place-items: center; box-shadow: inset 1px 3px 5px rgba(60,90,90,.5), inset 0 -3px 3px #e8f4f4; }
```
